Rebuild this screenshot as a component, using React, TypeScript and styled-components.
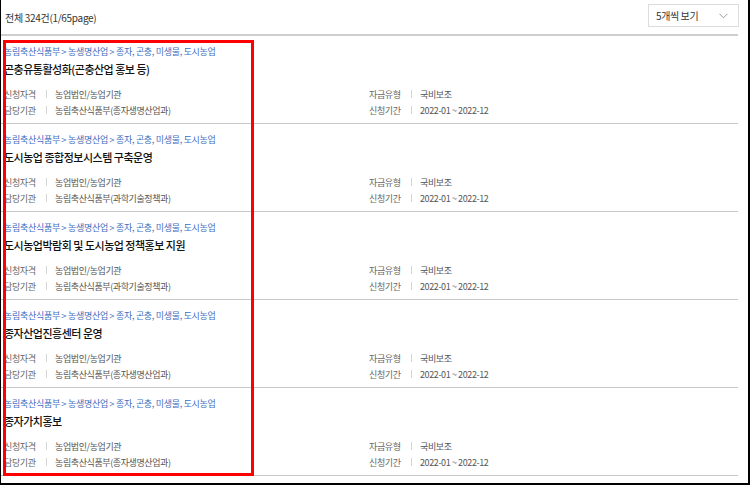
import styled, {createGlobalStyle} from 'styled-components'

const GlobalStyle = createGlobalStyle`
  html, body {
    margin: 0;
    padding: 0;
    background: #fff;
  }
  body {
    font-family: "Noto Sans CJK KR", "Noto Sans", sans-serif;
  }
`

const Frame = styled.div`
  position: relative;
  box-sizing: border-box;
  width: 750px;
  height: 485px;
  border-left: 1px solid #000;
  border-right: 2px solid #000;
  border-bottom: 2px solid #000;
  overflow: hidden;
`

const Board = styled.div`
  width: 737px;
`

const Header = styled.div`
  display: flex;
  align-items: center;
  justify-content: space-between;
  height: 34px;
  padding-left: 4px;
  border-bottom: 2px solid #cfcfcf;
`

const Total = styled.span`
  font-size: 10px;
  color: #333;
  letter-spacing: -0.3px;
`

const Select = styled.div`
  display: flex;
  align-items: center;
  justify-content: space-between;
  box-sizing: border-box;
  width: 91px;
  height: 23px;
  margin-right: -1px;
  margin-top: -3px;
  padding: 0 10px 0 7px;
  border: 1px solid #dcdcdc;
  font-size: 10px;
  color: #333;
  letter-spacing: -0.4px;
`

const Item = styled.div`
  box-sizing: border-box;
  height: 88px;
  padding: 10px 0 0 3px;
  border-bottom: 1px solid #c8c8c8;
`

const Crumb = styled.div`
  height: 12px;
  line-height: 12px;
  font-size: 9px;
  color: #3f6dbf;
  letter-spacing: -0.3px;
`

const Title = styled.div`
  height: 16px;
  line-height: 16px;
  margin-top: 3px;
  font-size: 11px;
  font-weight: 500;
  color: #111;
  letter-spacing: -0.5px;
`

const Meta = styled.div`
  display: grid;
  grid-template-columns: 365px 1fr;
  grid-auto-rows: 16px;
  margin-top: 9px;
`

const Field = styled.div`
  display: flex;
  align-items: center;
  font-size: 9px;
  letter-spacing: -0.4px;
`

const Label = styled.span`
  width: 42px;
  color: #666;
`

const Bar = styled.span`
  width: 1px;
  height: 8px;
  margin-right: 8px;
  background: #d5d5d5;
`

const Value = styled.span`
  color: #555;
`

const Highlight = styled.div`
  position: absolute;
  left: 2px;
  top: 40px;
  box-sizing: border-box;
  width: 251px;
  height: 436px;
  border: 3px solid #ff0000;
  pointer-events: none;
`

const Chevron = () => (
  <svg width="9" height="6" viewBox="0 0 9 6" fill="none">
    <path d="M0.5 0.8 L4.5 4.8 L8.5 0.8" stroke="#9a9a9a" strokeWidth="1" />
  </svg>
)

const items = [
  {title: '곤충유통활성화(곤충산업 홍보 등)', dept: '농림축산식품부(종자생명산업과)'},
  {title: '도시농업 종합정보시스템 구축운영', dept: '농림축산식품부(과학기술정책과)'},
  {title: '도시농업박람회 및 도시농업 정책홍보 지원', dept: '농림축산식품부(과학기술정책과)'},
  {title: '종자산업진흥센터 운영', dept: '농림축산식품부(종자생명산업과)'},
  {title: '종자가치홍보', dept: '농림축산식품부(종자생명산업과)'},
]

export default function App() {
  return (
    <Frame>
      <GlobalStyle />
      <Board>
        <Header>
          <Total>전체 324건(1/65page)</Total>
          <Select>
            <span>5개씩 보기</span>
            <Chevron />
          </Select>
        </Header>
        {items.map((it) => (
          <Item key={it.title}>
            <Crumb>농림축산식품부 &gt; 농생명산업 &gt; 종자, 곤충, 미생물, 도시농업</Crumb>
            <Title>{it.title}</Title>
            <Meta>
              <Field>
                <Label>신청자격</Label>
                <Bar />
                <Value>농업법인/농업기관</Value>
              </Field>
              <Field>
                <Label>자금유형</Label>
                <Bar />
                <Value>국비보조</Value>
              </Field>
              <Field>
                <Label>담당기관</Label>
                <Bar />
                <Value>{it.dept}</Value>
              </Field>
              <Field>
                <Label>신청기간</Label>
                <Bar />
                <Value>2022-01 ~ 2022-12</Value>
              </Field>
            </Meta>
          </Item>
        ))}
      </Board>
      <Highlight />
    </Frame>
  )
}
